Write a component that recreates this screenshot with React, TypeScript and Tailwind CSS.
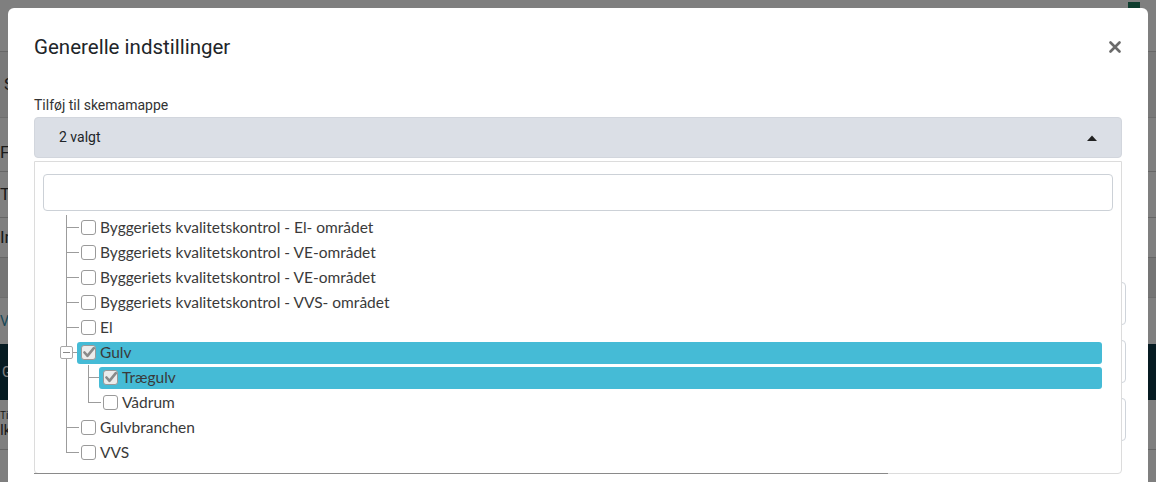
import React from "react";

type Node = {
  label: string;
  level: 1 | 2;
  checked?: boolean;
  selected?: boolean;
  expander?: boolean;
  last?: boolean;
};

const NODES: Node[] = [
  { label: "Byggeriets kvalitetskontrol - El- området", level: 1 },
  { label: "Byggeriets kvalitetskontrol - VE-området", level: 1 },
  { label: "Byggeriets kvalitetskontrol - VE-området", level: 1 },
  { label: "Byggeriets kvalitetskontrol - VVS- området", level: 1 },
  { label: "El", level: 1 },
  { label: "Gulv", level: 1, checked: true, selected: true, expander: true },
  { label: "Trægulv", level: 2, checked: true, selected: true },
  { label: "Vådrum", level: 2, last: true },
  { label: "Gulvbranchen", level: 1 },
  { label: "VVS", level: 1, last: true },
];

function Checkbox({ checked }: { checked?: boolean }) {
  return (
    <span
      className={`flex h-[15px] w-[15px] shrink-0 items-center justify-center rounded-[3px] border border-[#9a9a9a] ${
        checked ? "bg-[#ececec]" : "bg-white"
      }`}
    >
      {checked && (
        <svg width="12" height="11" viewBox="0 0 12 11">
          <path d="M1.5 5.5 L4.5 8.8 L10.8 1.2" fill="none" stroke="#8a8a8a" strokeWidth="2.6" strokeLinecap="round" strokeLinejoin="round" />
        </svg>
      )}
    </span>
  );
}

function TreeRow({ node }: { node: Node }) {
  const lvl1Half = node.level === 1 && node.last;
  return (
    <div className="relative flex h-[25px] items-center">
      {/* level 1 trunk */}
      <span className={`absolute left-[31px] top-0 w-px bg-[#9c9c9c] ${lvl1Half ? "h-[13px]" : "h-full"}`} />
      {node.level === 1 && !node.expander && (
        <span className="absolute left-[31px] top-[12px] h-px w-[13px] bg-[#9c9c9c]" />
      )}
      {node.expander && (
        <>
          <span className="absolute left-[25px] top-[6px] flex h-[13px] w-[13px] items-center justify-center rounded-[2px] border border-[#a8a8a8] bg-white">
            <span className="h-px w-[7px] bg-[#888]" />
          </span>
          <span className="absolute left-[38px] top-[12px] h-px w-[5px] bg-[#9c9c9c]" />
        </>
      )}
      {node.level === 2 && (
        <>
          <span className={`absolute left-[53px] top-0 w-px bg-[#9c9c9c] ${node.last ? "h-[13px]" : "h-full"}`} />
          <span className="absolute left-[53px] top-[12px] h-px w-[13px] bg-[#9c9c9c]" />
        </>
      )}
      <div
        className={`relative mr-[19px] flex h-[22px] flex-1 items-center gap-[4px] rounded-[3px] pl-[4px] ${
          node.level === 1 ? "ml-[42px]" : "ml-[64px]"
        } ${node.selected ? "bg-[#45bbd6]" : ""}`}
      >
        <Checkbox checked={node.checked} />
        <span className="text-[15.5px] leading-none text-[#3a3a3a] [font-family:Lato,'Open_Sans',sans-serif]">
          {node.label}
        </span>
      </div>
    </div>
  );
}

function BackgroundPage() {
  return (
    <div className="flex h-full flex-col bg-white text-[#333] [font-family:Roboto,sans-serif]">
      <div className="flex h-[52px] items-start justify-end border-b border-[#cfcfcf] bg-white pr-[16px]">
        <span className="mt-[2px] h-[8px] w-[12px] rounded-b-[2px] bg-[#1d7a5c]" />
      </div>
      <div className="flex h-[66px] items-center border-b border-[#ddd] bg-[#f2f2f2] pl-[4px] text-[17px]">Skema</div>
      <div className="flex h-[54px] items-end border-b border-[#ccc] pb-[6px] text-[17px]">Fravær</div>
      <div className="flex h-[46px] items-center border-b border-[#ccc] text-[17px]">
        Type <span className="text-[#c00]">*</span>
      </div>
      <div className="flex h-[40px] items-center border-b border-[#ccc] text-[17px]">Ingen</div>
      <div className="h-[40px] border-b border-[#ddd] bg-[#eaeaea]" />
      <div className="flex h-[46px] items-center text-[14px] text-[#2f8fb0]">Vis mere</div>
      <div className="flex h-[56px] items-center bg-[#0d3645] pl-[2px] text-[14px] text-white">Gemør</div>
      <div className="flex h-[50px] flex-col justify-center border-b border-[#ccc] text-[10px] leading-tight">
        <span>Tilhør</span>
        <span className="text-[14px]">Ikke valgt</span>
      </div>
      <div className="flex-1 bg-white" />
    </div>
  );
}

export default function App() {
  return (
    <div className="relative h-[482px] w-[1156px] overflow-hidden">
      <BackgroundPage />
      <div className="absolute inset-0 bg-black/50">
        <div className="ml-[8px] mt-[8px] h-[520px] w-[1140px] rounded-[6px] bg-white px-[26px] pt-[25px] [font-family:Roboto,sans-serif]">
          <div className="flex items-center justify-between">
            <h2 className="text-[20.5px] font-normal leading-[28px] text-[#212529]">Generelle indstillinger</h2>
            <svg width="12" height="12" viewBox="0 0 12 12" className="mr-[1px]">
              <path d="M1.5 1.5 L10.5 10.5 M10.5 1.5 L1.5 10.5" stroke="#6b6b6b" strokeWidth="2.6" strokeLinecap="round" />
            </svg>
          </div>

          <div className="mt-[34px] text-[14px] leading-[20px] text-[#333]">Tilføj til skemamappe</div>

          <div className="relative mt-[2px]">
            <div className="flex h-[41px] items-center justify-between rounded-[4px] border border-[#d2d6dd] bg-[#dbdfe6] pl-[24px] pr-[24px]">
              <span className="text-[14px] text-[#212529]">2 valgt</span>
              <svg width="10" height="6" viewBox="0 0 10 6">
                <path d="M0 6 L5 0.5 L10 6 Z" fill="#222" />
              </svg>
            </div>

            {/* form fields underneath the dropdown */}
            <div className="-mr-[4px] flex flex-col gap-[15px] pt-[124px]">
              <div className="h-[43px] rounded-[4px] border border-[#cfd4da] bg-white" />
              <div className="h-[43px] rounded-[4px] border border-[#cfd4da] bg-white" />
              <div className="h-[43px] rounded-[4px] border border-[#cfd4da] bg-white" />
            </div>

            {/* dropdown */}
            <div className="absolute left-0 right-0 top-[44px] h-[313px] rounded-b-[4px] border border-[#dcdcdc] bg-white">
              <div className="mx-[8px] mt-[12px] h-[37px] rounded-[4px] border border-[#ccd1d7] bg-white" />
              <div className="mt-[4px] flex flex-col">
                {NODES.map((n, i) => (
                  <TreeRow key={i} node={n} />
                ))}
              </div>
              <span className="absolute -bottom-px -left-px h-px w-[854px] bg-[#8a8a8a]" />
            </div>
          </div>
        </div>
      </div>
    </div>
  );
}
